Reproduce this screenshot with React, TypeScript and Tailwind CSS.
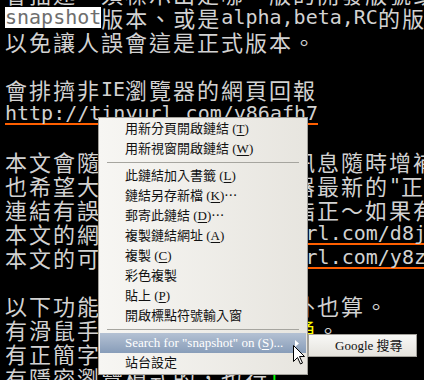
import React from "react";

type Seg = [string, string?];

const lines: Seg[][] = [
  [["會描述，須標示出是哪一版的開發版號或測試版本"]],
  [["snapshot", "sel"], ["版本、或是alpha,beta,RC的版本"]],
  [["以免讓人誤會這是正式版本。"]],
  [],
  [["會排擠非IE瀏覽器的網頁回報"]],
  [["http://tinyurl.com/y86afh7", "link"]],
  [],
  [["本文會隨著版本更新及新的訊息隨時增補"]],
  [['也希望大家能多多使用瀏覽器最新的"正式版本"']],
  [["連結有誤，請大家留言告知指正～如果有"]],
  [["本文的網址： "], ["http://tinyurl.com/d8jz7p", "link"]],
  [["本文的可印版:"], ["http://tinyurl.com/y8zq4m", "link"]],
  [],
  [["以下功能，除了擴充套件以外也算。"]],
  [["有滑鼠手勢功能的請標示為"], ["通", "yellow"], ["。"]],
  [["有正簡字轉換功能的也算。"]],
  [["有隱密瀏覽模式的，也行"], ["[", "green"]],
];

const segClass: Record<string, string> = {
  sel: "text-[#6e6e6e] bg-[linear-gradient(to_bottom,transparent_2px,white_2px,white_23px,transparent_23px)]",
  link: "box-border border-b-2 border-[#ff5f00]",
  yellow: "text-[#ffff00]",
  green: "text-[#00ff00]",
};

// wide (CJK) chars take two latin cells, so they get their own font size
const Runs = ({ text, kind }: { text: string; kind?: string }) => {
  const runs: { wide: boolean; s: string }[] = [];
  for (const ch of text) {
    const wide = (ch.codePointAt(0) ?? 0) > 0x2e7f;
    const last = runs[runs.length - 1];
    if (last && last.wide === wide) last.s += ch;
    else runs.push({ wide, s: ch });
  }
  const extra = kind ? segClass[kind] : "";
  return (
    <>
      {runs.map((r, i) =>
        r.wide ? (
          <span
            key={i}
            className={`inline-block h-[24px] align-top text-[22px] leading-[24px] tracking-[2px] font-['Noto_Sans_CJK_TC',sans-serif] ${extra}`}
          >
            {r.s}
          </span>
        ) : (
          <span
            key={i}
            className={`inline-block h-[24px] align-top text-[20px] leading-[24px] font-['DejaVu_Sans_Mono',monospace] ${extra}`}
          >
            {r.s}
          </span>
        )
      )}
    </>
  );
};

const Key = ({ k }: { k: string }) => (
  <span>
    (<span className="underline underline-offset-2">{k}</span>)
  </span>
);

const Item = ({ children }: { children: React.ReactNode }) => (
  <div className="flex h-[20px] items-center pl-[25px] whitespace-pre">{children}</div>
);

const Sep = () => (
  <div className="px-[7px] py-[3px]">
    <div className="h-px bg-[#a6a59f]" />
  </div>
);

const ContextMenu = () => (
  <div className="absolute left-[98px] top-[117px] w-[210px] border border-[#a3a19b] bg-linear-to-r from-[#f7f6f3] to-[#e7e5df] p-px text-[13px] text-[#111] font-['Liberation_Serif','Noto_Sans_CJK_TC',serif]">
    <Item>
      用新分頁開啟鏈結 <Key k="T" />
    </Item>
    <Item>
      用新視窗開啟鏈結 <Key k="W" />
    </Item>
    <Sep />
    <Item>
      此鏈結加入書籤 <Key k="L" />
    </Item>
    <Item>
      鏈結另存新檔 <Key k="K" />⋯
    </Item>
    <Item>
      郵寄此鏈結 <Key k="D" />⋯
    </Item>
    <Item>
      複製鏈結網址 <Key k="A" />
    </Item>
    <Item>
      複製 <Key k="C" />
    </Item>
    <Item>彩色複製</Item>
    <Item>
      貼上 <Key k="P" />
    </Item>
    <Item>開啟標點符號輸入窗</Item>
    <Sep />
    <div className="relative flex h-[20px] items-center bg-linear-to-b from-[#b4c1d3] to-[#889db9] pl-[25px] whitespace-pre text-white">
      Search for "snapshot" on <Key k="S" />...
      <svg className="absolute left-[195px] top-[7px]" width="4" height="7" viewBox="0 0 4 7">
        <path d="M0 0 L4 3.5 L0 7 Z" fill="#fff" />
      </svg>
    </div>
    <Item>站台設定</Item>
  </div>
);

const SubMenu = () => (
  <div className="absolute left-[308px] top-[334px] flex h-[23px] w-[109px] items-center border border-[#a3a19b] bg-linear-to-b from-[#f8f8f6] to-[#e5e3dd] pl-[26px] text-[13px] text-[#111] font-['Liberation_Serif','Noto_Sans_CJK_TC',serif]">
    Google 搜尋
  </div>
);

const Cursor = () => (
  <svg className="absolute left-[293px] top-[345px]" width="13" height="20" viewBox="0 0 13 20">
    <path
      d="M0.5 0.5 L0.5 16.5 L4.5 12.5 L7.5 19 L9.5 18 L6.5 11.5 L11.5 11.5 Z"
      fill="#fff"
      stroke="#000"
      strokeWidth="1"
      strokeLinejoin="miter"
    />
  </svg>
);

export default function App() {
  return (
    <div className="relative h-[380px] w-[424px] overflow-hidden bg-black">
      <div className="-mt-[19px] pl-[5px] text-[#d2d2d2] whitespace-pre">
        {lines.map((segs, i) => (
          <div key={i} className="h-[24px] overflow-visible whitespace-pre">
            {segs.map(([t, kind], j) => (
              <Runs key={j} text={t} kind={kind} />
            ))}
          </div>
        ))}
      </div>
      <ContextMenu />
      <SubMenu />
      <Cursor />
    </div>
  );
}
